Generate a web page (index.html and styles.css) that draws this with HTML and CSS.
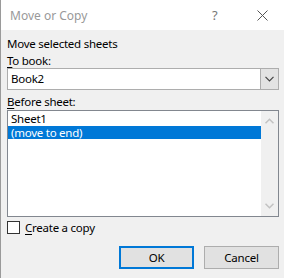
FILE: index.html
```html
<!DOCTYPE html>
<html>
<head>
<meta charset="utf-8">
<link rel="stylesheet" href="styles.css">
</head>
<body>
<div class="window">
  <div class="titlebar">
    <span class="title">Move or Copy</span>
    <span class="help">?</span>
    <span class="close">
      <svg width="11" height="11" viewBox="0 0 11 11"><path d="M0.5 0.5 L10.5 10.5 M10.5 0.5 L0.5 10.5" stroke="#555" stroke-width="1" fill="none"/></svg>
    </span>
  </div>
  <div class="content">
    <div class="heading">Move selected sheets</div>
    <div class="label label1"><u>T</u>o book:</div>
    <div class="combo">
      <div class="combo-text">Book2</div>
      <div class="combo-btn">
        <svg width="9" height="6" viewBox="0 0 9 6"><path d="M0.5 0.8 L4.5 4.8 L8.5 0.8" stroke="#444" stroke-width="1.2" fill="none"/></svg>
      </div>
    </div>
    <div class="label label2"><u>B</u>efore sheet:</div>
    <div class="listbox">
      <div class="items">
        <div class="item">Sheet1</div>
        <div class="item selected">(move to end)</div>
      </div>
      <div class="scrollbar">
        <svg width="9" height="6" viewBox="0 0 9 6"><path d="M0.5 5.2 L4.5 1.2 L8.5 5.2" stroke="#c2c2c2" stroke-width="1.5" fill="none"/></svg>
        <svg width="9" height="6" viewBox="0 0 9 6"><path d="M0.5 0.8 L4.5 4.8 L8.5 0.8" stroke="#c2c2c2" stroke-width="1.5" fill="none"/></svg>
      </div>
    </div>
    <div class="check-row">
      <span class="checkbox"></span>
      <span class="check-label"><u>C</u>reate a copy</span>
    </div>
    <div class="buttons">
      <div class="btn btn-default">OK</div>
      <div class="btn">Cancel</div>
    </div>
  </div>
</div>
</body>
</html>
```
FILE: styles.css
```css
html, body {
  margin: 0;
  padding: 0;
}
body {
  width: 284px;
  height: 278px;
  overflow: hidden;
  background: #f0f0f0;
  font-family: "Noto Sans", "Open Sans", sans-serif;
  font-size: 11.5px;
  letter-spacing: -0.25px;
  color: #000;
}
.window {
  height: 278px;
  border-left: 1px solid #9a9a9a;
  box-sizing: border-box;
  display: flex;
  flex-direction: column;
}
.titlebar {
  height: 30px;
  background: #fff;
  display: flex;
  align-items: center;
  padding-left: 9px;
  flex-shrink: 0;
  letter-spacing: 0;
}
.title {
  color: #999;
  font-size: 12px;
  flex: 1;
}
.help {
  color: #777;
  font-size: 13px;
  width: 16px;
  margin-right: 29px;
}
.close {
  width: 27px;
  display: flex;
  align-items: center;
}
.content {
  padding: 6px 5px 0 6px;
  display: flex;
  flex-direction: column;
}
.heading {
  line-height: 16px;
}
.label {
  line-height: 16px;
}
.label1 {
  margin-top: 1px;
}
.label u, .check-label u {
  text-decoration-thickness: 1px;
  text-underline-offset: 2px;
}
.combo {
  margin-top: -1px;
  height: 22px;
  box-sizing: border-box;
  border: 1px solid #adadad;
  background: #fff;
  display: flex;
}
.combo-text {
  flex: 1;
  padding-left: 3px;
  line-height: 20px;
}
.combo-btn {
  width: 17px;
  background: #e3e3e3;
  border: 1px solid #adadad;
  margin: -1px -1px -1px 0;
  display: flex;
  align-items: center;
  justify-content: center;
}
.label2 {
  margin-top: 4px;
}
.listbox {
  height: 107px;
  box-sizing: border-box;
  border: 1px solid #82878f;
  background: #fff;
  display: flex;
}
.items {
  flex: 1;
  padding-top: 1px;
}
.item {
  height: 13px;
  line-height: 13px;
  padding-left: 3px;
  overflow: hidden;
}
.item.selected {
  background: #0078d7;
  color: #fff;
  margin-top: 1px;
}
.scrollbar {
  width: 17px;
  background: #f0f0f0;
  display: flex;
  flex-direction: column;
  align-items: center;
  justify-content: space-between;
  padding: 7px 0 7px;
}
.check-row {
  margin-top: 4px;
  display: flex;
  align-items: center;
  height: 13px;
}
.checkbox {
  width: 13px;
  height: 13px;
  box-sizing: border-box;
  border: 1px solid #333;
  background: #fff;
  margin-right: 5px;
}
.check-label {
  line-height: 13px;
}
.buttons {
  margin-top: 12px;
  display: flex;
  justify-content: flex-end;
  gap: 10px;
}
.btn {
  width: 75px;
  height: 23px;
  box-sizing: border-box;
  border: 1px solid #adadad;
  background: #e1e1e1;
  display: flex;
  align-items: center;
  justify-content: center;
}
.btn-default {
  border: 2px solid #0078d7;
}
```
